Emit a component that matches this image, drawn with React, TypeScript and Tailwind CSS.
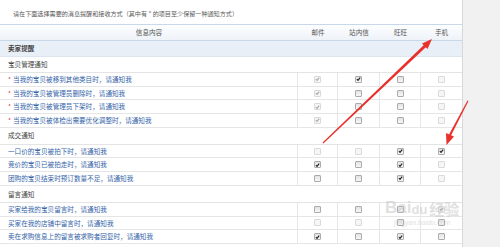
import type { ReactNode } from "react";

type Row = { t: string; star?: boolean; c: number[] };

// 0 unchecked, 1 checked, 2 checked + disabled, 3 disabled
const groups: { title: string; rows: Row[] }[] = [
  {
    title: "宝贝管理通知",
    rows: [
      { t: "当我的宝贝被移到其他类目时，请通知我", star: true, c: [2, 1, 0, 3] },
      { t: "当我的宝贝被管理员删除时，请通知我", star: true, c: [2, 0, 0, 3] },
      { t: "当我的宝贝被管理员下架时，请通知我", star: true, c: [2, 0, 0, 3] },
      { t: "当我的宝贝被体检出需要优化调整时，请通知我", star: true, c: [2, 0, 0, 3] },
    ],
  },
  {
    title: "成交通知",
    rows: [
      { t: "一口价的宝贝被拍下时，请通知我", c: [3, 3, 1, 1] },
      { t: "竞价的宝贝已被拍走时，请通知我", c: [1, 0, 1, 3] },
      { t: "团购的宝贝结束时预订数量不足，请通知我", c: [0, 0, 1, 3] },
    ],
  },
  {
    title: "留言通知",
    rows: [
      { t: "买家给我的宝贝留言时，请通知我", c: [0, 0, 0, 2] },
      { t: "买家在我的店铺中留言时，请通知我", c: [3, 3, 0, 0] },
      { t: "卖在求购信息上的留言被求购者回复时，请通知我", c: [1, 0, 1, 0] },
    ],
  },
];

const cols = "grid grid-cols-[298px_40px_42px_41px_41px]";

function Box({ s }: { s: number }) {
  const off = s === 2 || s === 3;
  return (
    <span
      className={
        off
          ? "flex h-[7px] w-[7px] items-center justify-center rounded-[1px] border border-[#dadada] bg-[#f6f6f6]"
          : "flex h-[7px] w-[7px] items-center justify-center rounded-[1px] border border-[#ababab] bg-gradient-to-b from-[#e2e2e2] to-[#f8f8f8]"
      }
    >
      {(s === 1 || s === 2) && (
        <svg viewBox="0 0 6 6" className="h-[6px] w-[6px]">
          <path
            d="M1 3.2 L2.4 4.6 L5 1.3"
            fill="none"
            stroke={s === 1 ? "#1e1e1e" : "#a8a8a8"}
            strokeWidth="1.3"
          />
        </svg>
      )}
    </span>
  );
}

function Cell({ children, last }: { children: ReactNode; last?: boolean }) {
  return (
    <div
      className={
        last
          ? "flex items-center justify-center"
          : "flex items-center justify-center border-r border-[#e6e6e6]"
      }
    >
      {children}
    </div>
  );
}

export default function App() {
  return (
    <div className="relative flex h-[247px] w-[500px] overflow-hidden bg-white font-['Noto_Sans_CJK_SC',sans-serif] text-[6.6px] leading-none">
      <div className="w-[463px] shrink-0 border-r border-[#d8d8d8]">
        <p className="h-[24px] pl-[13px] pt-[11px] text-[6.1px] text-[#5a5a5a]">
          请在下面选择需要的消息提醒和接收方式（其中有 " 的项目至少保留一种通知方式）
        </p>

        <div
          className={`${cols} h-[17px] border-y border-[#c9d8e8] bg-gradient-to-b from-[#fdfeff] to-[#eef3f9] text-[#555]`}
        >
          <div className="flex items-center justify-center">信息内容</div>
          <div className="flex items-center justify-center">邮件</div>
          <div className="flex items-center justify-center">站内信</div>
          <div className="flex items-center justify-center">旺旺</div>
          <div className="flex items-center justify-center">手机</div>
        </div>

        <div className="flex h-[16px] items-center border-b border-[#dde6f0] bg-[#e9eff7] pl-[8px] font-bold text-[#444]">
          卖家提醒
        </div>

        {groups.map((g, gi) => (
          <div key={g.title}>
            <div
              className={
                gi === 0
                  ? "flex h-[16px] items-center border-b border-[#e4e4e4] pl-[8px] text-[#444]"
                  : "flex h-[17px] items-center border-b border-[#e4e4e4] pl-[8px] text-[#444]"
              }
            >
              {g.title}
            </div>
            {g.rows.map((r) => (
              <div
                key={r.t}
                className={`${cols} h-[13.7px] border-b border-[#e6e6e6]`}
              >
                <div className="flex items-center border-r border-[#e6e6e6] pl-[8px] text-[#3463a8]">
                  {r.star && <span className="mr-[2px] text-[#e0403c]">*</span>}
                  {r.t}
                </div>
                {r.c.map((s, i) => (
                  <Cell key={i} last={i === 3}>
                    <Box s={s} />
                  </Cell>
                ))}
              </div>
            ))}
          </div>
        ))}
      </div>
      <div className="flex-1 bg-[#f1f1f1]" />

      {/* watermark */}
      <div className="pointer-events-none absolute left-[385px] top-[199px] flex flex-col items-center text-[#c4c4c4] opacity-50">
        <div className="flex items-end font-['Liberation_Sans',sans-serif] text-[17px] font-bold leading-none">
          <span>Bai</span>
          <span className="text-[13px]">du</span>
          <span className="ml-[2px] font-['Noto_Sans_CJK_SC',sans-serif] text-[15px]">经验</span>
        </div>
        <span className="mt-[3px] font-['Liberation_Sans',sans-serif] text-[7px]">
          jingyan.baidu.com
        </span>
      </div>

      {/* red arrows */}
      <svg
        className="pointer-events-none absolute left-0 top-0"
        width="500"
        height="247"
        viewBox="0 0 500 247"
      >
        <polygon points="322.6,142.6 323.4,143.4 426.6,46.6 424.4,44.4" fill="#e8312c" />
        <polygon points="432,39 422,43.5 427.5,49" fill="#e8312c" />
        <polygon points="467.5,100.5 468.5,101 451,135.5 449,134.5" fill="#e8312c" />
        <polygon points="446.5,145 446,133 454,136.5" fill="#e8312c" />
      </svg>
    </div>
  );
}
